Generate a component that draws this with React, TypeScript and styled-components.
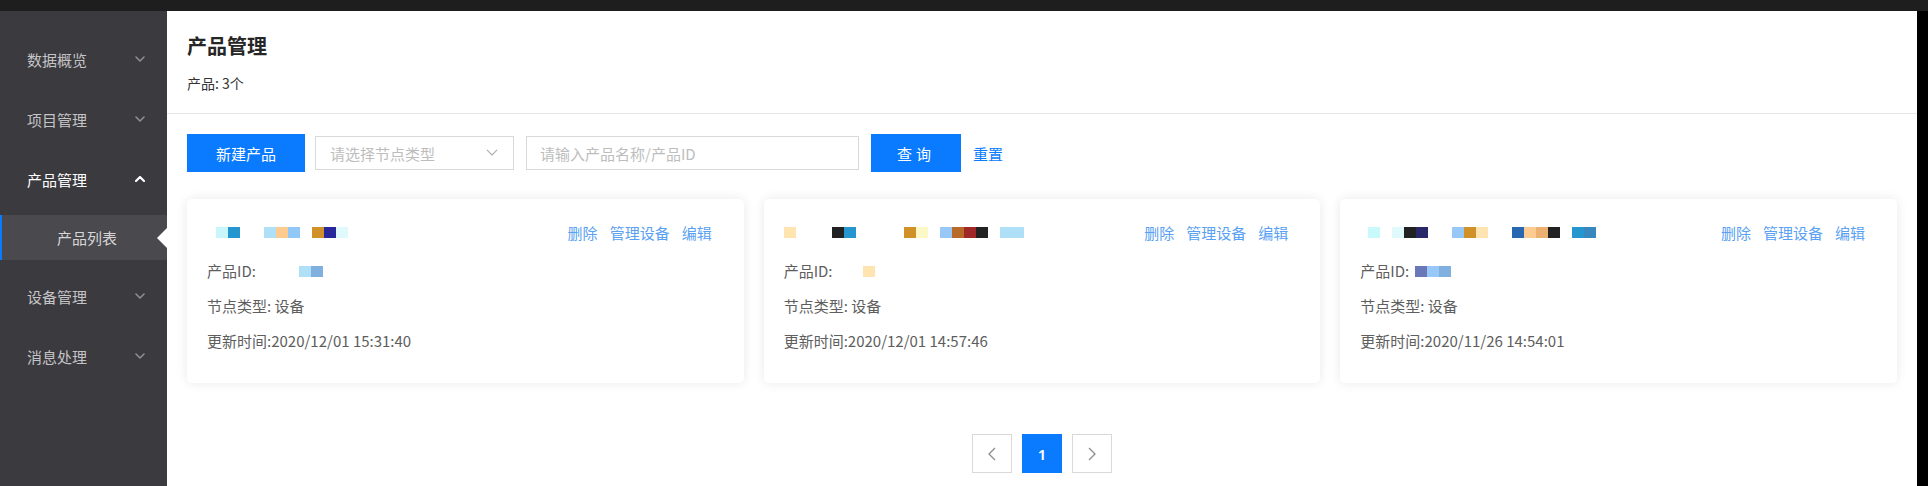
import React from "react";
import styled, { createGlobalStyle } from "styled-components";

const GlobalStyle = createGlobalStyle`
  html, body {
    margin: 0;
    padding: 0;
    background: #000;
  }
  body {
    font-family: "Noto Sans CJK SC", "Noto Sans", sans-serif;
    color: #333;
  }
  * {
    box-sizing: border-box;
  }
`;

const Page = styled.div`
  width: 1928px;
  height: 486px;
  display: flex;
  flex-direction: column;
  overflow: hidden;
`;

const TopBar = styled.div`
  height: 11px;
  background: #1e1e1e;
  flex-shrink: 0;
`;

const Body = styled.div`
  flex: 1;
  display: flex;
`;

const Sidebar = styled.nav`
  width: 167px;
  background: #3b3a3f;
  padding-top: 18px;
  flex-shrink: 0;
`;

const MenuItem = styled.div<{ $active?: boolean }>`
  height: 60px;
  display: flex;
  align-items: center;
  justify-content: space-between;
  padding: 0 22px 0 27px;
  font-size: 15px;
  color: ${(p) => (p.$active ? "#ffffff" : "#c4c4c6")};
`;

const SubMenu = styled.div`
  padding: 6px 0 6px;
`;

const SubItem = styled.div`
  position: relative;
  height: 45px;
  display: flex;
  align-items: center;
  padding-left: 55px;
  font-size: 15px;
  color: #d6d6d8;
  background: #4a494e;
  border-left: 2px solid #0a7bff;

  &::after {
    content: "";
    position: absolute;
    right: 0;
    top: 50%;
    margin-top: -10px;
    border-style: solid;
    border-width: 10px 10px 10px 0;
    border-color: transparent #ffffff transparent transparent;
  }
`;

const Main = styled.main`
  flex: 1;
  background: #ffffff;
  display: flex;
  flex-direction: column;
`;

const RightEdge = styled.div`
  width: 11px;
  background: #000;
  flex-shrink: 0;
`;

const Header = styled.header`
  padding: 21px 20px 20px;
  border-bottom: 1px solid #e6e6e6;
`;

const Title = styled.h1`
  margin: 0;
  font-size: 20px;
  line-height: 28px;
  font-weight: 700;
  color: #262626;
`;

const Subtitle = styled.p`
  margin: 13px 0 0;
  font-size: 14px;
  line-height: 20px;
  color: #333;
`;

const Toolbar = styled.div`
  display: flex;
  align-items: center;
  padding: 20px 20px 0;
`;

const PrimaryButton = styled.button<{ $width: number }>`
  width: ${(p) => p.$width}px;
  height: 38px;
  border: none;
  background: #0a7bff;
  color: #fff;
  font-family: inherit;
  font-size: 15px;
  letter-spacing: ${(p) => (p.$width < 100 ? "4px" : "0")};
  cursor: pointer;
  flex-shrink: 0;
`;

const SelectBox = styled.div`
  width: 199px;
  height: 34px;
  margin-left: 10px;
  border: 1px solid #d9d9d9;
  display: flex;
  align-items: center;
  justify-content: space-between;
  padding: 0 15px 0 14px;
  font-size: 15px;
  color: #bdbdbd;
`;

const TextInput = styled.input`
  width: 333px;
  height: 34px;
  margin-left: 12px;
  border: 1px solid #d9d9d9;
  padding: 0 13px;
  font-family: inherit;
  font-size: 15px;
  color: #333;
  outline: none;

  &::placeholder {
    color: #bdbdbd;
  }
`;

const QueryWrap = styled.div`
  margin-left: 12px;
  display: flex;
  align-items: center;
`;

const LinkButton = styled.a`
  margin-left: 12px;
  font-size: 15px;
  color: #0a7bff;
  text-decoration: none;
  cursor: pointer;
`;

const CardGrid = styled.div`
  display: grid;
  grid-template-columns: repeat(3, 1fr);
  gap: 20px;
  padding: 27px 20px 0;
`;

const Card = styled.div`
  background: #fff;
  border-radius: 5px;
  box-shadow: 0 0 12px rgba(0, 0, 0, 0.09);
  padding: 22px 32px 32px 20px;
`;

const CardHead = styled.div`
  height: 22px;
  display: flex;
  align-items: center;
  justify-content: space-between;
`;

const Actions = styled.div`
  display: flex;
  gap: 12px;
`;

const ActionLink = styled.a`
  font-size: 15px;
  color: #5aa1f2;
  cursor: pointer;
`;

const Field = styled.div<{ $first?: boolean }>`
  margin-top: ${(p) => (p.$first ? "18px" : "15px")};
  display: flex;
  align-items: center;
  font-size: 15px;
  line-height: 20px;
  color: #5e5e5e;
`;

const Mosaic = styled.span<{ $lead: number }>`
  display: inline-flex;
  margin-left: ${(p) => p.$lead}px;
  height: 11px;
`;

const Cell = styled.span<{ $color: string | null }>`
  width: 12px;
  height: 11px;
  background: ${(p) => p.$color ?? "transparent"};
`;

const Pager = styled.div`
  display: flex;
  justify-content: center;
  gap: 10px;
  margin-top: 51px;
`;

const PageBox = styled.div<{ $current?: boolean }>`
  width: 40px;
  height: 39px;
  display: flex;
  align-items: center;
  justify-content: center;
  border: 1px solid ${(p) => (p.$current ? "#0a7bff" : "#d9d9d9")};
  background: ${(p) => (p.$current ? "#0a7bff" : "#fff")};
  color: ${(p) => (p.$current ? "#fff" : "#8c8c8c")};
  font-family: "Noto Sans", sans-serif;
  font-size: 15px;
  font-weight: 600;
`;

const Chevron = ({ up, color, width = 10, stroke = 1.6 }: { up?: boolean; color: string; width?: number; stroke?: number }) => (
  <svg width={width} height={width * 0.6} viewBox="0 0 10 6" fill="none">
    <polyline
      points={up ? "1,5 5,1 9,5" : "1,1 5,5 9,1"}
      stroke={color}
      strokeWidth={stroke}
      strokeLinecap="round"
      strokeLinejoin="round"
    />
  </svg>
);

const PagerArrow = ({ right }: { right?: boolean }) => (
  <svg width="8" height="14" viewBox="0 0 8 14" fill="none">
    <polyline points={right ? "1,1 7,7 1,13" : "7,1 1,7 7,13"} stroke="#8c8c8c" strokeWidth="1.3" />
  </svg>
);

type Product = {
  titleLead: number;
  title: (string | null)[];
  idLead: number;
  id: (string | null)[];
  updated: string;
};

const products: Product[] = [
  {
    titleLead: 9,
    title: ["#c8f6fb", "#2596d0", null, null, "#b0e0f8", "#fdca90", "#90c8f8", null, "#d09228", "#28289a", "#e0fafc"],
    idLead: 43,
    id: ["#b0e0f8", "#80b0e0"],
    updated: "2020/12/01 15:31:40",
  },
  {
    titleLead: 0,
    title: [
      "#fde4b0", null, null, null, "#222222", "#2596d0", null, null, null, null,
      "#d09228", "#fdf8c8", null, "#98c8f8", "#b86a28", "#a02828", "#222222", null, "#b0e0f8", "#b0e0f8",
    ],
    idLead: 30,
    id: ["#fde4b0"],
    updated: "2020/12/01 14:57:46",
  },
  {
    titleLead: 8,
    title: [
      "#c8fafc", null, "#e0fafc", "#222222", "#28286a", null, null, "#98c8f8", "#d09228", "#fde4b0",
      null, null, "#2868b0", "#fdca90", "#ecb070", "#222222", null, "#2596d0", "#3888c0",
    ],
    idLead: 6,
    id: ["#6878b8", "#98c8f8", "#80b0e0"],
    updated: "2020/11/26 14:54:01",
  },
];

const menu = [
  { label: "数据概览" },
  { label: "项目管理" },
  { label: "产品管理", open: true, children: ["产品列表"] },
  { label: "设备管理" },
  { label: "消息处理" },
];

export default function App() {
  return (
    <>
      <GlobalStyle />
      <Page>
        <TopBar />
        <Body>
          <Sidebar>
            {menu.map((m) => (
              <React.Fragment key={m.label}>
                <MenuItem $active={m.open}>
                  <span>{m.label}</span>
                  {m.open ? (
                    <Chevron up color="#ffffff" stroke={2.2} />
                  ) : (
                    <Chevron color="#8e8e92" />
                  )}
                </MenuItem>
                {m.children && (
                  <SubMenu>
                    {m.children.map((c) => (
                      <SubItem key={c}>{c}</SubItem>
                    ))}
                  </SubMenu>
                )}
              </React.Fragment>
            ))}
          </Sidebar>

          <Main>
            <Header>
              <Title>产品管理</Title>
              <Subtitle>产品: 3个</Subtitle>
            </Header>

            <Toolbar>
              <PrimaryButton $width={118}>新建产品</PrimaryButton>
              <SelectBox>
                <span>请选择节点类型</span>
                <Chevron color="#b0b0b0" width={12} stroke={1} />
              </SelectBox>
              <TextInput placeholder="请输入产品名称/产品ID" />
              <QueryWrap>
                <PrimaryButton $width={90}>查询</PrimaryButton>
              </QueryWrap>
              <LinkButton>重置</LinkButton>
            </Toolbar>

            <CardGrid>
              {products.map((p, i) => (
                <Card key={i}>
                  <CardHead>
                    <Mosaic $lead={p.titleLead}>
                      {p.title.map((c, j) => (
                        <Cell key={j} $color={c} />
                      ))}
                    </Mosaic>
                    <Actions>
                      <ActionLink>删除</ActionLink>
                      <ActionLink>管理设备</ActionLink>
                      <ActionLink>编辑</ActionLink>
                    </Actions>
                  </CardHead>
                  <Field $first>
                    产品ID:
                    <Mosaic $lead={p.idLead}>
                      {p.id.map((c, j) => (
                        <Cell key={j} $color={c} />
                      ))}
                    </Mosaic>
                  </Field>
                  <Field>节点类型: 设备</Field>
                  <Field>更新时间:{p.updated}</Field>
                </Card>
              ))}
            </CardGrid>

            <Pager>
              <PageBox>
                <PagerArrow />
              </PageBox>
              <PageBox $current>1</PageBox>
              <PageBox>
                <PagerArrow right />
              </PageBox>
            </Pager>
          </Main>
          <RightEdge />
        </Body>
      </Page>
    </>
  );
}
